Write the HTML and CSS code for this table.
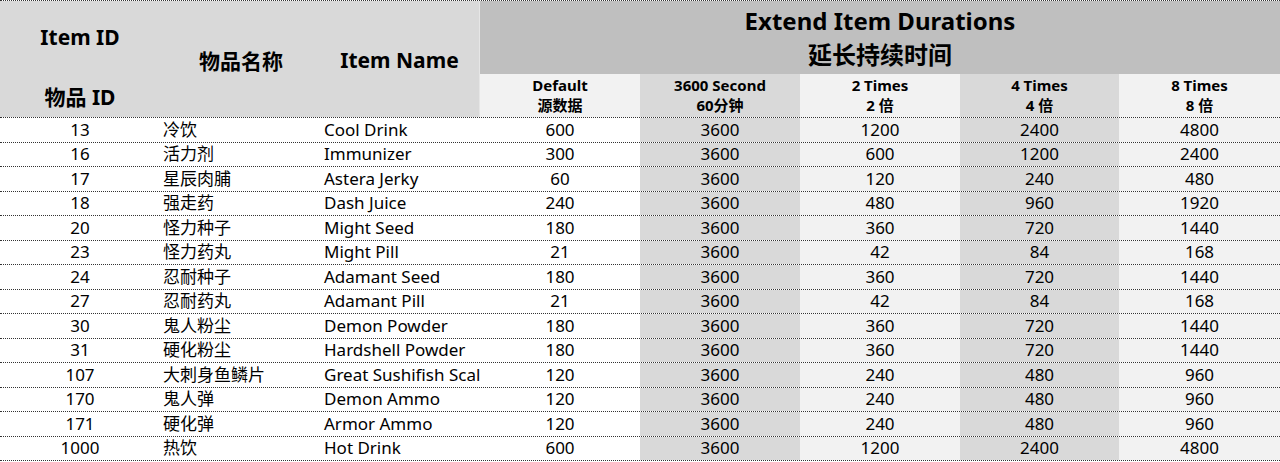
FILE: index.html
```html
<!DOCTYPE html>
<html lang="zh">
<head>
<meta charset="utf-8">
<title>Extend Item Durations</title>
<link rel="stylesheet" href="styles.css">
</head>
<body>
<div class="sheet">
  <div class="head">
    <div class="h-id">
      <span>Item ID</span>
      <span>物品 ID</span>
    </div>
    <div class="h-cn">物品名称</div>
    <div class="h-en">Item Name</div>
    <div class="h-title">
      <span>Extend Item Durations</span>
      <span>延长持续时间</span>
    </div>
    <div class="sub light"><span>Default</span><span>源数据</span></div>
    <div class="sub dark"><span>3600 Second</span><span>60分钟</span></div>
    <div class="sub light"><span>2 Times</span><span>2 倍</span></div>
    <div class="sub dark"><span>4 Times</span><span>4 倍</span></div>
    <div class="sub light"><span>8 Times</span><span>8 倍</span></div>
  </div>
  <div class="body">
    <div class="row"><div class="c id">13</div><div class="c cn">冷饮</div><div class="c en">Cool Drink</div><div class="c n">600</div><div class="c n dark">3600</div><div class="c n light">1200</div><div class="c n dark">2400</div><div class="c n light">4800</div></div>
    <div class="row"><div class="c id">16</div><div class="c cn">活力剂</div><div class="c en">Immunizer</div><div class="c n">300</div><div class="c n dark">3600</div><div class="c n light">600</div><div class="c n dark">1200</div><div class="c n light">2400</div></div>
    <div class="row"><div class="c id">17</div><div class="c cn">星辰肉脯</div><div class="c en">Astera Jerky</div><div class="c n">60</div><div class="c n dark">3600</div><div class="c n light">120</div><div class="c n dark">240</div><div class="c n light">480</div></div>
    <div class="row"><div class="c id">18</div><div class="c cn">强走药</div><div class="c en">Dash Juice</div><div class="c n">240</div><div class="c n dark">3600</div><div class="c n light">480</div><div class="c n dark">960</div><div class="c n light">1920</div></div>
    <div class="row"><div class="c id">20</div><div class="c cn">怪力种子</div><div class="c en">Might Seed</div><div class="c n">180</div><div class="c n dark">3600</div><div class="c n light">360</div><div class="c n dark">720</div><div class="c n light">1440</div></div>
    <div class="row"><div class="c id">23</div><div class="c cn">怪力药丸</div><div class="c en">Might Pill</div><div class="c n">21</div><div class="c n dark">3600</div><div class="c n light">42</div><div class="c n dark">84</div><div class="c n light">168</div></div>
    <div class="row"><div class="c id">24</div><div class="c cn">忍耐种子</div><div class="c en">Adamant Seed</div><div class="c n">180</div><div class="c n dark">3600</div><div class="c n light">360</div><div class="c n dark">720</div><div class="c n light">1440</div></div>
    <div class="row"><div class="c id">27</div><div class="c cn">忍耐药丸</div><div class="c en">Adamant Pill</div><div class="c n">21</div><div class="c n dark">3600</div><div class="c n light">42</div><div class="c n dark">84</div><div class="c n light">168</div></div>
    <div class="row"><div class="c id">30</div><div class="c cn">鬼人粉尘</div><div class="c en">Demon Powder</div><div class="c n">180</div><div class="c n dark">3600</div><div class="c n light">360</div><div class="c n dark">720</div><div class="c n light">1440</div></div>
    <div class="row"><div class="c id">31</div><div class="c cn">硬化粉尘</div><div class="c en">Hardshell Powder</div><div class="c n">180</div><div class="c n dark">3600</div><div class="c n light">360</div><div class="c n dark">720</div><div class="c n light">1440</div></div>
    <div class="row"><div class="c id">107</div><div class="c cn">大刺身鱼鳞片</div><div class="c en">Great Sushifish Scale</div><div class="c n">120</div><div class="c n dark">3600</div><div class="c n light">240</div><div class="c n dark">480</div><div class="c n light">960</div></div>
    <div class="row"><div class="c id">170</div><div class="c cn">鬼人弹</div><div class="c en">Demon Ammo</div><div class="c n">120</div><div class="c n dark">3600</div><div class="c n light">240</div><div class="c n dark">480</div><div class="c n light">960</div></div>
    <div class="row"><div class="c id">171</div><div class="c cn">硬化弹</div><div class="c en">Armor Ammo</div><div class="c n">120</div><div class="c n dark">3600</div><div class="c n light">240</div><div class="c n dark">480</div><div class="c n light">960</div></div>
    <div class="row"><div class="c id">1000</div><div class="c cn">热饮</div><div class="c en">Hot Drink</div><div class="c n">600</div><div class="c n dark">3600</div><div class="c n light">1200</div><div class="c n dark">2400</div><div class="c n light">4800</div></div>
  </div>
</div>
</body>
</html>
```

FILE: styles.css
```css
* { box-sizing: border-box; }
html, body { margin: 0; padding: 0; background: #fff; }
body {
  font-family: "Noto Sans", "Noto Sans CJK SC", sans-serif;
  color: #000;
  width: 1280px;
  height: 462px;
  overflow: hidden;
}
.sheet {
  border-top: 1px dotted #333;
}
.head {
  display: grid;
  grid-template-columns: 160px 160px 160px 160px 160px 160px 159px 161px;
  grid-template-rows: 73px 43px;
  border-bottom: 1px dotted #333;
  font-weight: 700;
}
.h-id, .h-cn, .h-en {
  grid-row: 1 / 3;
  background: #d9d9d9;
  font-size: 21px;
}
.h-id {
  grid-column: 1;
  display: flex;
  flex-direction: column;
  justify-content: space-between;
  align-items: center;
  padding: 23px 0 7px;
  line-height: 26px;
}
.h-cn, .h-en {
  display: flex;
  align-items: center;
  justify-content: center;
  padding-top: 2px;
}
.h-cn { grid-column: 2; padding-left: 2px; }
.h-en { grid-column: 3; border-right: 1px solid #e6e6e6; }
.h-title {
  grid-column: 4 / 9;
  grid-row: 1;
  background: #bfbfbf;
  display: flex;
  flex-direction: column;
  align-items: center;
  justify-content: center;
  font-size: 24px;
  line-height: 34px;
}
.sub {
  grid-row: 2;
  display: flex;
  flex-direction: column;
  align-items: center;
  justify-content: center;
  font-size: 15px;
  line-height: 20px;
  padding-bottom: 2px;
}
.light { background: #f2f2f2; }
.dark { background: #d9d9d9; }
.row {
  display: grid;
  grid-template-columns: 160px 160px 160px 160px 160px 160px 159px 161px;
  height: 24.5px;
  border-bottom: 1px dotted #333;
  font-size: 17px;
}
.c {
  display: flex;
  align-items: center;
  white-space: nowrap;
  overflow: hidden;
  line-height: 20px;
}
.id, .n { justify-content: center; }
.cn { padding-left: 3px; }
.en { padding-left: 4px; }
```
